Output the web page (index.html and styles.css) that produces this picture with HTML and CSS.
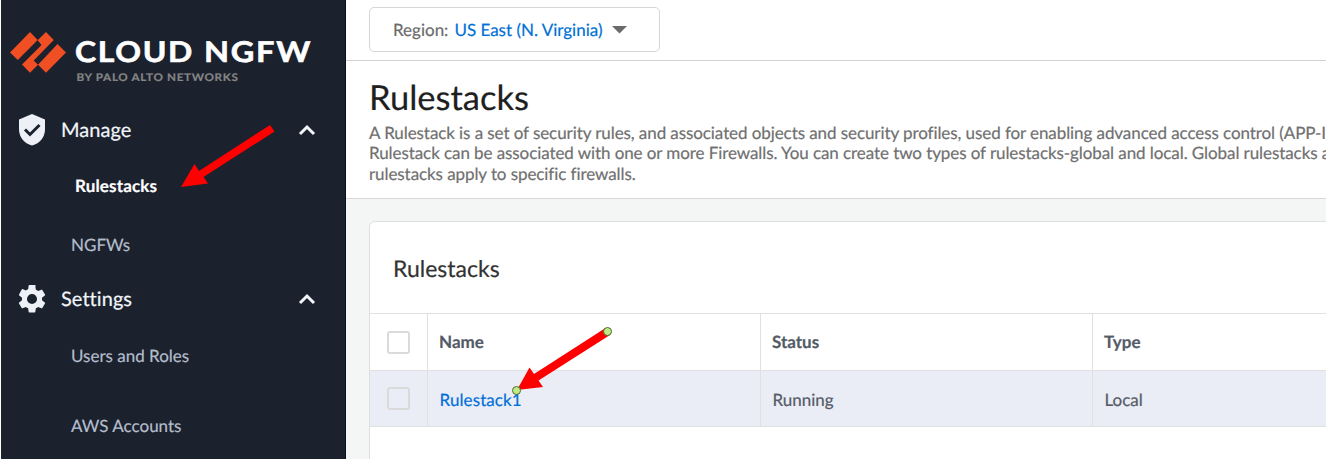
FILE: index.html
```html
<!DOCTYPE html>
<html lang="en">
<head>
<meta charset="utf-8">
<title>Cloud NGFW</title>
<link rel="stylesheet" href="styles.css">
</head>
<body>
<div class="app">
  <aside class="sidebar">
    <div class="brand">
      <svg class="brand-mark" width="56" height="42" viewBox="0 0 56 42" fill="#f04e23">
        <path d="M0 20.400 20 0 27.700 8 7.800 28z"/>
        <path d="M36 0 43.800 8 23.700 28.500 28 32.700 20 40.700 12 32.500 31.500 13 27.700 8.300z"/>
        <path d="M47.500 12 56 20.400 36 40.700 28 32.700z"/>
      </svg>
      <svg class="brand-text" width="240" height="56" viewBox="0 0 240 56">
        <text class="brand-name" x="0" y="35" textLength="119" lengthAdjust="spacingAndGlyphs">CLOUD</text>
        <text class="brand-name" x="129" y="35" textLength="108" lengthAdjust="spacingAndGlyphs">NGFW</text>
        <text class="brand-by" x="1.500" y="54" textLength="162" lengthAdjust="spacingAndGlyphs">BY PALO ALTO NETWORKS</text>
      </svg>
    </div>
    <nav class="nav">
      <div class="group">
        <svg class="group-icon" width="26" height="32" viewBox="0 0 26 32"><path fill="#edf1f7" d="M13 0 26 5.500V15c0 8-5 14.500-13 16.500C5 29.500 0 23 0 15V5.500z"/><path fill="none" stroke="#1b212d" stroke-width="3" d="M6 15.500 11 20.500 20.500 11"/></svg>
        <span class="group-label">Manage</span>
        <svg class="chevron" width="18" height="12" viewBox="0 0 18 12"><path d="M2 10 9 3 16 10"/></svg>
      </div>
      <a class="item item-active">Rulestacks</a>
      <a class="item item-ngfw">NGFWs</a>
      <div class="group group-settings">
        <svg class="group-icon" width="28" height="28" viewBox="2 2 20 20"><path fill="#edf1f7" d="M19.140 12.940c.04-.3.060-.61.060-.94s-.02-.64-.07-.94l2.030-1.580a.49.49 0 0 0 .12-.61l-1.920-3.320a.49.49 0 0 0-.59-.22l-2.390.96c-.5-.38-1.030-.7-1.620-.94l-.36-2.540A.48.48 0 0 0 13.920 2h-3.840c-.24 0-.43.170-.47.410l-.36 2.540c-.59.240-1.130.570-1.620.940l-2.390-.96a.49.49 0 0 0-.59.220L2.740 8.870c-.12.210-.08.470.12.610l2.030 1.580c-.05.300-.09.630-.09.940s.02.640.070.940l-2.030 1.580a.49.49 0 0 0-.12.610l1.920 3.320c.12.220.370.290.590.220l2.390-.96c.5.380 1.030.700 1.620.940l.36 2.540c.05.240.240.410.480.410h3.840c.24 0 .44-.17.470-.41l.36-2.540c.59-.24 1.130-.56 1.620-.94l2.390.96c.22.080.470 0 .59-.22l1.920-3.320a.49.49 0 0 0-.12-.61zM12 15.600A3.600 3.600 0 1 1 12 8.400a3.600 3.600 0 0 1 0 7.200z"/></svg>
        <span class="group-label">Settings</span>
        <svg class="chevron" width="18" height="12" viewBox="0 0 18 12"><path d="M2 10 9 3 16 10"/></svg>
      </div>
      <a class="item item-users">Users and Roles</a>
      <a class="item item-aws">AWS Accounts</a>
    </nav>
  </aside>
  <main class="main">
    <div class="topbar">
      <div class="region"><span class="region-label">Region:</span><span class="region-value">US East (N. Virginia)</span><svg width="15" height="8" viewBox="0 0 15 8"><path fill="#6b6b6b" d="M0 0H15L7.500 7.500z"/></svg></div>
    </div>
    <header class="intro">
      <h1 class="title">Rulestacks</h1>
      <p class="desc">A Rulestack is a set of security rules, and associated objects and security profiles, used for enabling advanced access control (APP-I<br>Rulestack can be associated with one or more Firewalls. You can create two types of rulestacks-global and local. Global rulestacks a<br>rulestacks apply to specific firewalls.</p>
    </header>
    <section class="card">
      <h2 class="card-title">Rulestacks</h2>
      <div class="row head">
        <div class="cell check"><span class="box"></span></div>
        <div class="cell">Name</div><div class="cell">Status</div><div class="cell">Type</div>
      </div>
      <div class="row data">
        <div class="cell check"><span class="box"></span></div>
        <div class="cell link">Rulestack1</div><div class="cell">Running</div><div class="cell">Local</div>
      </div>
    </section>
  </main>
  <svg class="arrows" width="640" height="461" viewBox="0 0 640 461">
    <path fill="red" d="M270 125 274.500 131.500 203.500 177 208 183.500 181 187 194.500 164 199 171z"/>
    <path fill="red" d="M605.500 328 610 335 538.500 380.500 543 387 517 390 529.500 367.500 534 374z"/>
    <circle class="handle" cx="607.500" cy="331.500" r="4"/>
    <circle class="handle" cx="516.500" cy="390.500" r="4"/>
  </svg>
</div>
</body>
</html>
```
FILE: styles.css
```css
* { box-sizing: border-box; }
body { margin: 0; background: #fff; font-family: Lato, "Liberation Sans", sans-serif; -webkit-text-stroke-width: .2px; text-rendering: geometricPrecision; }
.app { position: relative; display: flex; width: 1326px; height: 459px; padding-left: 1px; overflow: hidden; }
.sidebar { flex: none; width: 345px; height: 459px; background: #1b212d; border-right: 1px solid #0a1024; }
.brand { display: flex; align-items: flex-start; height: 114px; padding: 27px 0 0 9px; }
.brand-mark { flex: none; margin-top: 5px; }
.brand-text { flex: none; margin-left: 9px; }
.brand-name { font-size: 28.500px; font-weight: 700; letter-spacing: 1.500px; fill: #fff; stroke: #fff; stroke-width: .6px; }
.brand-by { font-size: 10.500px; font-weight: 700; letter-spacing: .6px; fill: #858585; stroke: #858585; stroke-width: .2px; }
.group { display: flex; align-items: center; height: 32px; padding: 0 29px 0 18px; }
.group-icon { flex: none; width: 26px; }
.group-settings .group-icon { width: 28px; margin: 0 -1px; }
.group-label { flex: 1; margin-left: 16px; font-size: 20px; letter-spacing: .05px; color: #f2f5fa; }
.chevron { flex: none; fill: none; stroke: #f2f5fa; stroke-width: 3; }
.item { display: block; height: 24px; line-height: 24px; padding-left: 70px; font-size: 17px; color: #b4bdcc; }
.item-active { margin-top: 28px; padding-left: 74px; font-weight: 700; letter-spacing: .15px; color: #fff; }
.item-ngfw { margin-top: 35px; }
.group-settings { margin-top: 26px; }
.item-users { margin-top: 29px; }
.item-aws { margin-top: 46px; }
.main { flex: none; width: 980px; overflow: hidden; background: #f4f5f5; }
.topbar { height: 61px; padding: 7px 0 0 23px; background: #fff; border-bottom: 1px solid #d2d2d2; }
.region { display: flex; align-items: center; width: 291px; height: 45px; padding-left: 23px; border: 1px solid #d6d6d6; border-radius: 5px; font-size: 17px; }
.region-label { color: #6b6b6b; }
.region-value { margin: 0 10px 0 6px; color: #0070d6; }
.intro { height: 138px; padding: 15px 0 0 23px; background: #fff; border-bottom: 1px solid #d8d9d9; white-space: nowrap; }
.title { margin: 0; height: 46.500px; line-height: 44px; font-size: 34.500px; font-weight: 400; color: #1f1f1f; }
.desc { margin: 0; font-size: 17px; line-height: 20.500px; letter-spacing: -.08px; color: #707070; font-variant-ligatures: common-ligatures; }
.card { width: 1000px; height: 260px; margin: 22px 0 0 23px; background: #fff; border: 1px solid #dedfdf; border-radius: 6px; }
.card-title { margin: 0; height: 91px; padding: 0 0 0 23px; line-height: 92px; font-size: 23px; font-weight: 400; color: #333; }
.row { display: grid; grid-template-columns: 57px 333px 332px 1fr; height: 57px; border-top: 1px solid #e0e0e0; font-size: 17px; color: #545b66; }
.cell { display: flex; align-items: center; padding-left: 11px; border-left: 1px solid #e0e0e0; }
.cell:first-child { padding-left: 17px; border-left: 0; }
.head { font-weight: 700; }
.head .cell:not(.check) { padding-bottom: 1px; }
.data { background: #eaecf6; border-bottom: 1px solid #e0e0e0; }
.data .cell:not(.check) { padding-top: 2px; padding-left: 11.500px; }
.link { letter-spacing: .1px; color: #0070d6; }
.box { width: 23px; height: 23px; border: 2px solid #dadada; border-radius: 3px; }
.arrows { position: absolute; left: 0; top: 0; }
.handle { fill: #c0ea85; stroke: #4c6b2c; stroke-width: 1; }
```
